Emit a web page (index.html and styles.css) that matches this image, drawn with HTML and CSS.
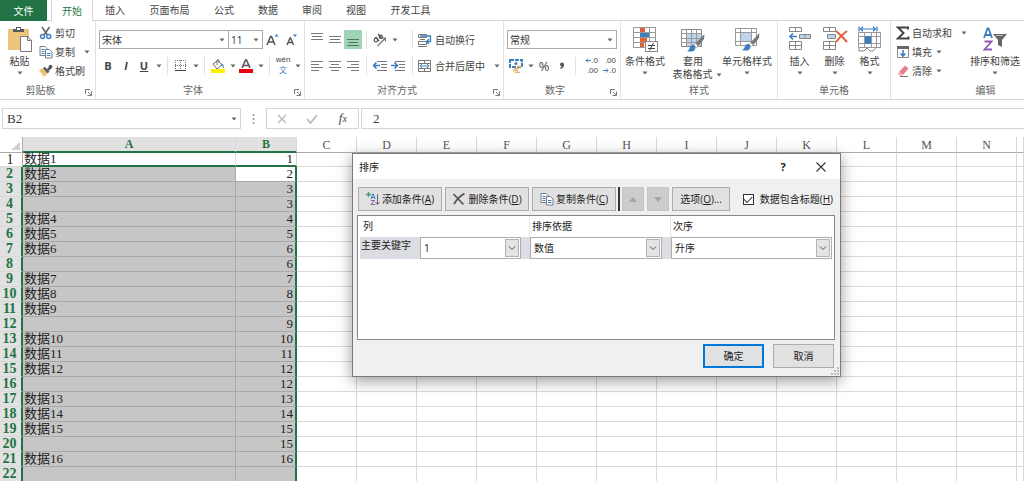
FILE: index.html
```html
<!DOCTYPE html>
<html lang="zh-CN">
<head>
<meta charset="utf-8">
<title>排序</title>
<link rel="stylesheet" href="styles.css">
</head>
<body>
<svg class="defs" aria-hidden="true">
  <symbol id="caret" viewBox="0 0 6 4"><path d="M0.5 0.5h5L3 3.5z" fill="#666"/></symbol>
  <symbol id="launch" viewBox="0 0 7 7"><path d="M.5 5V.5H5M3 3l3 3M6.5 2.5v4h-4" fill="none" stroke="#777"/></symbol>
  <symbol id="chev" viewBox="0 0 14 18"><rect x=".5" y=".5" width="13" height="17" fill="#e4e4e4" stroke="#b4b4b4"/><path d="M4 7.500l3 3 3-3" fill="none" stroke="#555"/></symbol>
  <symbol id="copy" viewBox="0 0 14 14"><path d="M1 1.5h5l2 2v7H1z" fill="#fff" stroke="#6f7f8f"/><path d="M2.500 4.500h3M2.500 6.500h3M2.500 8.500h3" stroke="#3f7fb5"/><path d="M6.500 4.500h4l2.500 2.500v6H6.500z" fill="#fff" stroke="#6f7f8f"/><path d="M8 8.500h3.500M8 10.500h3.500" stroke="#3f7fb5"/></symbol>
  <symbol id="brush" viewBox="0 0 18 18"><path d="M17.500 0L9 9l2.500 3L17 5z" fill="#777"/><path d="M8.500 9.500l2.500 2.500-1.500 1.500-2.700-2z" fill="#fff" stroke="#888" stroke-width=".6"/><path d="M0 17c3-1 2-4 4.500-5.500s5 1.500 3.500 4S3 18 0 17z" fill="#3c7fbf"/></symbol>
</svg>

<header>
  <nav class="tabs">
    <button class="tab file">文件</button>
    <button class="tab active">开始</button>
    <button class="tab w2">插入</button>
    <button class="tab w4">页面布局</button>
    <button class="tab w2">公式</button>
    <button class="tab w2">数据</button>
    <button class="tab w2">审阅</button>
    <button class="tab w2">视图</button>
    <button class="tab w4">开发工具</button>
  </nav>

  <div class="ribbon">
    <section class="group clipboard">
      <div class="body stacks">
        <button class="large">
          <svg width="26" height="26" viewBox="0 0 26 26"><rect x="1" y="3" width="21" height="21" fill="#ebc57c"/><path d="M6 6V3h3V1h5v2h3v3z" fill="#595959"/><rect x="10" y="2" width="3" height="2" fill="#fff"/><path d="M13.500 10.500h7l4 4v11h-11z" fill="#fff" stroke="#777"/><path d="M20.500 10.500v4h4" fill="none" stroke="#777"/></svg>
          <span>粘贴</span><svg class="caret"><use href="#caret"/></svg>
        </button>
        <div class="stack">
          <button class="small"><svg width="14" height="14" viewBox="0 0 14 14"><path d="M3 1l5.500 8M10.500 1L5 9" stroke="#666" stroke-width="1.600" fill="none"/><circle cx="3.500" cy="10.500" r="2" fill="none" stroke="#3c7fbf" stroke-width="1.400"/><circle cx="9.800" cy="10.500" r="2" fill="none" stroke="#3c7fbf" stroke-width="1.400"/></svg>剪切</button>
          <button class="small"><svg width="14" height="14"><use href="#copy"/></svg>复制<svg class="caret far"><use href="#caret"/></svg></button>
          <button class="small"><svg width="14" height="14" viewBox="0 0 14 14"><path d="M0 6l4-2 5 5-4 4z" fill="#ebc57c"/><path d="M5 3.500l4.500 5" stroke="#555" stroke-width="2.500"/><path d="M8 5l3.500-3.500 2 1.500L10 7z" fill="#555"/><circle cx="11.500" cy="2.500" r="1.800" fill="#555"/></svg>格式刷</button>
        </div>
      </div>
      <footer><span>剪贴板</span><button aria-label="剪贴板设置"><svg width="7" height="7"><use href="#launch"/></svg></button></footer>
    </section>

    <section class="group font">
      <div class="body rows">
        <div class="row">
          <span class="combo grow"><select aria-label="字体"><option>宋体</option></select><svg class="caret"><use href="#caret"/></svg></span>
          <span class="combo size"><select aria-label="字号"><option>11</option></select><svg class="caret"><use href="#caret"/></svg></span>
          <button class="tool wide" aria-label="增大字号"><svg width="14" height="14" viewBox="0 0 14 14"><path d="M1 12L4.500 3.500h1L9 12M2.500 9h5" fill="none" stroke="#555" stroke-width="1.500"/><path d="M8.500 3.500L10.500 1l2 2.500z" fill="#3c7fbf"/></svg></button>
          <button class="tool wide" aria-label="减小字号"><svg width="14" height="14" viewBox="0 0 14 14"><path d="M2 12l3-7h.6l3 7M3.200 9.500h4.400" fill="none" stroke="#555" stroke-width="1.400"/><path d="M8 1.500h4L10 4z" fill="#3c7fbf"/></svg></button>
        </div>
        <div class="row">
          <button class="tool letter"><b>B</b></button>
          <button class="tool letter"><b class="it">I</b></button>
          <button class="tool letter"><b><u>U</u></b></button>
          <svg class="caret"><use href="#caret"/></svg><i class="bar"></i>
          <button class="tool" aria-label="边框"><svg width="12" height="12" viewBox="0 0 12 12"><path d="M.5 0v11M5.500 0v11M10.500 0v11M0 .5h11M0 5.500h11" stroke="#777" stroke-dasharray="1 1"/><path d="M0 10.500h11" stroke="#444"/></svg></button>
          <svg class="caret"><use href="#caret"/></svg><i class="bar"></i>
          <button class="tool" aria-label="填充颜色"><svg width="14" height="14" viewBox="0 0 14 14"><path d="M2 5l5-3.500 4 4.500-5 4z" fill="#fff" stroke="#666"/><path d="M6 6V1.500Q6 .5 7 .5t1 1V4" fill="none" stroke="#777"/><path d="M10.500 4.500q3 .5 2 5-1.500-1-1-3z" fill="#3c7fbf"/><rect y="10" width="14" height="4" fill="#fff200"/></svg></button>
          <svg class="caret"><use href="#caret"/></svg>
          <button class="tool" aria-label="字体颜色"><svg width="14" height="14" viewBox="0 0 14 14"><path d="M3 9l3.500-8h1L11 9M4.200 6.500h5.600" fill="none" stroke="#555" stroke-width="1.600"/><rect y="10" width="14" height="4" fill="#e8000c"/></svg></button>
          <svg class="caret"><use href="#caret"/></svg><i class="bar"></i>
          <button class="tool phonetic"><span>wén</span><span class="blue">文</span></button>
          <svg class="caret"><use href="#caret"/></svg>
        </div>
      </div>
      <footer><span>字体</span><button aria-label="字体设置"><svg width="7" height="7"><use href="#launch"/></svg></button></footer>
    </section>

    <section class="group align">
      <div class="body rows">
        <div class="row">
          <button class="tool" aria-label="顶端对齐"><svg width="12" height="15" viewBox="0 0 12 15"><path d="M0 1.500h12M1 4.500h10M0 7.500h12" stroke="#777"/></svg></button>
          <button class="tool" aria-label="垂直居中"><svg width="12" height="15" viewBox="0 0 12 15"><path d="M0 4.500h12M1 7.500h10M0 10.500h12" stroke="#777"/></svg></button>
          <button class="tool on" aria-label="底端对齐"><svg width="12" height="15" viewBox="0 0 12 15"><path d="M0 7.500h12M1 10.500h10M0 13.500h12" stroke="#5b6e62"/></svg></button>
          <i class="bar"></i>
          <button class="tool" aria-label="方向"><svg width="14" height="14" viewBox="0 0 14 14"><path d="M4.500 13L12.500 5M12.500 8.500V5H9" fill="none" stroke="#777" stroke-width="1.200"/><circle cx="3" cy="7" r="1.800" fill="none" stroke="#555" stroke-width="1.200"/><path d="M2.500 4l3.500 4M5 1l4 4.500" stroke="#555" stroke-width="1.200"/><circle cx="7.800" cy="3.800" r="1.600" fill="none" stroke="#555" stroke-width="1.200"/></svg></button>
          <svg class="caret"><use href="#caret"/></svg>
          <button class="small"><svg width="14" height="14" viewBox="0 0 14 14"><path d="M.5 1.500h8v3h-8zM.5 8.500h8v3h-8z" fill="#fff" stroke="#777"/><path d="M2 3h10.500v5.500H9M11 6L8.500 8.500 11 11" fill="none" stroke="#3c7fbf" stroke-width="1.300"/><path d="M2 6.500h5M0 13.500h9" stroke="#777"/></svg>自动换行</button>
        </div>
        <div class="row">
          <button class="tool" aria-label="左对齐"><svg width="12" height="12" viewBox="0 0 12 12"><path d="M0 1.500h12M0 4.500h8M0 7.500h12M0 10.500h8" stroke="#777"/></svg></button>
          <button class="tool" aria-label="居中"><svg width="12" height="12" viewBox="0 0 12 12"><path d="M0 1.500h12M2 4.500h8M0 7.500h12M2 10.500h8" stroke="#777"/></svg></button>
          <button class="tool" aria-label="右对齐"><svg width="12" height="12" viewBox="0 0 12 12"><path d="M0 1.500h12M4 4.500h8M0 7.500h12M4 10.500h8" stroke="#777"/></svg></button>
          <i class="bar"></i>
          <button class="tool" aria-label="减少缩进"><svg width="14" height="12" viewBox="0 0 14 12"><path d="M4 1.500h10M8 4.500h6M8 7.500h6M4 10.500h10" stroke="#777"/><path d="M7 5.500H1M3.500 2.500l-3 3 3 3" fill="none" stroke="#3c7fbf" stroke-width="1.600"/></svg></button>
          <button class="tool" aria-label="增加缩进"><svg width="14" height="12" viewBox="0 0 14 12"><path d="M4 1.500h10M8 4.500h6M8 7.500h6M4 10.500h10" stroke="#777"/><path d="M0 5.500h6M3.500 2.500l3 3-3 3" fill="none" stroke="#3c7fbf" stroke-width="1.600"/></svg></button>
          <button class="small"><svg width="14" height="14" viewBox="0 0 14 14"><path d="M.5 1.500h12v11H.5zM.5 4.500h12M.5 9.500h12M6.500 1v3M6.500 10v3" fill="none" stroke="#777"/><path d="M2 7h9M4 5L2 7l2 2M9 5l2 2-2 2" fill="none" stroke="#3c7fbf"/></svg>合并后居中<svg class="caret far"><use href="#caret"/></svg></button>
        </div>
      </div>
      <footer><span>对齐方式</span><button aria-label="对齐设置"><svg width="7" height="7"><use href="#launch"/></svg></button></footer>
    </section>

    <section class="group number">
      <div class="body rows">
        <div class="row"><span class="combo grow"><select aria-label="数字格式"><option>常规</option></select><svg class="caret"><use href="#caret"/></svg></span></div>
        <div class="row">
          <button class="tool" aria-label="会计数字格式"><svg width="14" height="14" viewBox="0 0 14 14"><rect x="1" y="1" width="12" height="7" fill="#fff" stroke="#3c7fbf" stroke-width="2" stroke-dasharray="4 1"/><circle cx="7" cy="4.500" r="1.500" fill="#3c7fbf"/><path d="M5 9.500h5M4 11.500h5M6 13.500h5M8 7.500h5" stroke="#e8b365" stroke-width="1.400"/></svg></button>
          <svg class="caret"><use href="#caret"/></svg>
          <button class="tool percent">%</button>
          <button class="tool" aria-label="千位分隔"><svg width="6" height="8" viewBox="0 0 6 8"><circle cx="3" cy="2.500" r="2" fill="#555"/><path d="M5 2.500Q5 6 1.500 7l-.5-.8Q3 5 3 3z" fill="#555"/></svg></button>
          <i class="bar"></i>
          <button class="tool dec"><span><svg width="6" height="5" viewBox="0 0 6 5"><path d="M6 2.500H1M3 .5l-2 2 2 2" fill="none" stroke="#3c7fbf"/></svg>.0</span><span>.00</span></button>
          <button class="tool dec"><span>.00</span><span><svg width="6" height="5" viewBox="0 0 6 5"><path d="M0 2.500h5M3 .5l2 2-2 2" fill="none" stroke="#3c7fbf"/></svg>.0</span></button>
        </div>
      </div>
      <footer><span>数字</span><button aria-label="数字设置"><svg width="7" height="7"><use href="#launch"/></svg></button></footer>
    </section>

    <section class="group styles">
      <div class="body stacks">
        <button class="large">
          <svg width="26" height="26" viewBox="0 0 26 26"><path d="M1.500 1.500h22v20h-22zM1.500 6.500h22M1.500 11.500h22M1.500 16.500h22M8.500 1.500v20M17.500 1.500v20" fill="#fff" stroke="#999"/><path d="M8 2h5v4H8zM8 12h7v4H8zM8 17h4v4H8z" fill="#e0603a"/><path d="M8 7h9v4H8z" fill="#3c7fbf"/><rect x="13.500" y="15.500" width="12" height="10" fill="#fff" stroke="#888"/><path d="M16 19.500h7M16 22.500h7M21.500 17l-4 7.500" stroke="#444"/></svg>
          <span>条件格式</span><svg class="caret"><use href="#caret"/></svg>
        </button>
        <button class="large">
          <svg width="26" height="26" viewBox="0 0 26 26"><path d="M1.500 3.500h20v17h-20z" fill="#fff" stroke="#888"/><path d="M7 8h14v12H7z" fill="#bdd5ea"/><path d="M1.500 7.500h20M1.500 12.500h20M1.500 16.500h20M6.500 3.500v17M11.500 3.500v17M16.500 3.500v17" stroke="#999"/><use href="#brush" x="7" y="8" width="18" height="18"/></svg>
          <span>套用</span><span>表格格式<svg class="caret"><use href="#caret"/></svg></span>
        </button>
        <button class="large last">
          <svg width="26" height="26" viewBox="0 0 26 26"><path d="M1.500 2.500h21v17h-21zM1.500 6.500h21M1.500 15.500h21M6.500 2.500v17M17.500 2.500v17" fill="#fff" stroke="#999"/><path d="M7 7h10v8H7z" fill="#bdd5ea"/><use href="#brush" x="8" y="7" width="18" height="18"/></svg>
          <span>单元格样式</span><svg class="caret"><use href="#caret"/></svg>
        </button>
      </div>
      <footer><span>样式</span></footer>
    </section>

    <section class="group cells">
      <div class="body stacks">
        <button class="large">
          <svg width="24" height="26" viewBox="0 0 24 26"><path d="M1.500 1.500h12v4h-12zM7.500 1.500v4M1.500 15.500h12v8h-12zM1.500 19.500h12M7.500 15.500v8" fill="#fff" stroke="#888"/><path d="M11.500 8.500h11v4h-11z" fill="#bdd5ea" stroke="#888"/><path d="M17 8.500v4" stroke="#888"/><path d="M9 10.500H2M5 7.500l-3 3 3 3" fill="none" stroke="#3c7fbf" stroke-width="1.600"/></svg>
          <span>插入</span><svg class="caret"><use href="#caret"/></svg>
        </button>
        <button class="large">
          <svg width="26" height="26" viewBox="0 0 26 26"><path d="M1.500 1.500h12v4h-12zM7.500 1.500v4M1.500 15.500h12v8h-12zM1.500 19.500h12M7.500 15.500v8" fill="#fff" stroke="#888"/><path d="M5.500 8.500h8v4h-8z" fill="#bdd5ea" stroke="#888"/><path d="M14 5q5 4 11 11M25 5q-6 4-11 11" fill="none" stroke="#e0603a" stroke-width="2"/></svg>
          <span>删除</span><svg class="caret"><use href="#caret"/></svg>
        </button>
        <button class="large">
          <svg width="26" height="26" viewBox="0 0 26 26"><path d="M2 .5v5M20 .5v5M3 3h16M6 .8L3.500 3 6 5.200M16 .8L18.500 3 16 5.200" fill="none" stroke="#3c7fbf" stroke-width="1.200"/><path d="M1.500 6.500h22v15h-22zM1.500 10.500h22M1.500 17.500h22M7.500 6.500v15M14.500 6.500v15M19.500 6.500v15" fill="#fff" stroke="#999"/><path d="M8 10h6v8H8z" fill="#3c7fbf"/><path d="M2 22v3h5l3-3 3 3h3l3-3" fill="none" stroke="#888"/></svg>
          <span>格式</span><svg class="caret"><use href="#caret"/></svg>
        </button>
      </div>
      <footer><span>单元格</span></footer>
    </section>

    <section class="group edit">
      <div class="body stacks">
        <div class="stack">
          <button class="small"><svg width="14" height="14" viewBox="0 0 14 14"><path d="M12 3.500V1.500H2L7.500 7 2 12.500h10.500v-2" fill="none" stroke="#444" stroke-width="2"/></svg>自动求和<svg class="caret far"><use href="#caret"/></svg></button>
          <button class="small"><svg width="14" height="14" viewBox="0 0 14 14"><path d="M1.500 1.500h11v11h-11z" fill="#fff" stroke="#888"/><path d="M1 1h12v3H1z" fill="#666"/><path d="M7 5v6M4.500 8.500L7 11l2.500-2.500" fill="none" stroke="#3c7fbf" stroke-width="1.600"/></svg>填充<svg class="caret"><use href="#caret"/></svg></button>
          <button class="small"><svg width="14" height="14" viewBox="0 0 14 14"><path d="M3 8l6-6.500 3.500 3L7 11z" fill="#e8808f"/><path d="M3 8l4 3-2 1.500L1.500 10z" fill="#f2b5bd"/><path d="M4 12.500h8" stroke="#777"/></svg>清除<svg class="caret"><use href="#caret"/></svg></button>
        </div>
        <button class="large">
          <svg width="26" height="26" viewBox="0 0 26 26"><path d="M2 12L5.500 2.500h1L10 12M3.500 9h5" fill="none" stroke="#3c7fbf" stroke-width="1.800"/><path d="M2.500 15.500h7l-7 8h7.500" fill="none" stroke="#9159b5" stroke-width="1.800"/><path d="M11 8h14l-5 6v7l-4-2v-5z" fill="#666"/><path d="M14 9.500h7" stroke="#bbb"/></svg>
          <span>排序和筛选</span><svg class="caret"><use href="#caret"/></svg>
        </button>
      </div>
      <footer><span>编辑</span></footer>
    </section>
  </div>
</header>

<div class="formula">
  <span class="combo name"><input aria-label="名称框" value="B2"><svg class="caret"><use href="#caret"/></svg></span>
  <svg class="dots" width="3" height="12" viewBox="0 0 3 12"><path d="M1.500 1v11" stroke="#999" stroke-width="1.500" stroke-dasharray="2 2"/></svg>
  <div class="actions">
    <button aria-label="取消输入"><svg width="10" height="10" viewBox="0 0 10 10"><path d="M1 1l8 8M9 1L1 9" stroke="#bbb" stroke-width="1.500"/></svg></button>
    <button aria-label="输入"><svg width="12" height="10" viewBox="0 0 12 10"><path d="M1 5l3.500 4L11 1" fill="none" stroke="#bbb" stroke-width="1.800"/></svg></button>
    <button class="fx"><i>f<small>x</small></i></button>
  </div>
  <input class="value" aria-label="编辑栏" value="2">
</div>

<main>
  <table class="sheet">
    <colgroup><col class="num"><col class="a"><col class="b"><col span="12" class="c"><col></colgroup>
    <thead><tr id="letters"></tr></thead>
    <tbody id="rows"></tbody>
  </table>
</main>

<div class="dialog" role="dialog" aria-labelledby="title">
  <div class="title">
    <span id="title">排序</span>
    <button aria-label="帮助"><b>?</b></button>
    <button aria-label="关闭"><svg width="10" height="10" viewBox="0 0 10 10"><path d="M.5.5l9 9M9.500.5l-9 9" stroke="#333" stroke-width="1.100"/></svg></button>
  </div>
  <div class="commands">
    <button class="cmd"><svg width="14" height="14" viewBox="0 0 14 14"><path d="M0 2.500h5M2.500 0v5" stroke="#4a9a78" stroke-width="1.400"/><path d="M5 7l1.700-5h.6L9 7M5.500 5.500h3" fill="none" stroke="#3c7fbf"/><path d="M5 8.500h3.500L5 12.500h4" fill="none" stroke="#9159b5"/><path d="M11.500 2v10M9.500 10l2 2.500 2-2.500" fill="none" stroke="#666"/></svg><span>添加条件(<u>A</u>)</span></button>
    <button class="cmd"><svg width="14" height="14" viewBox="0 0 14 14"><path d="M1.500 2l10 10.500M12.500 1.500Q6 5 2 12" fill="none" stroke="#555" stroke-width="1.800"/></svg><span>删除条件(<u>D</u>)</span></button>
    <button class="cmd"><svg width="14" height="14"><use href="#copy"/></svg><span>复制条件(<u>C</u>)</span></button>
    <i class="split"></i>
    <button class="move" disabled aria-label="上移"><svg width="8" height="5" viewBox="0 0 8 5"><path d="M0 5l4-5 4 5z" fill="#a5a5a5"/></svg></button>
    <button class="move" disabled aria-label="下移"><svg width="8" height="5" viewBox="0 0 8 5"><path d="M0 0l4 5 4-5z" fill="#a5a5a5"/></svg></button>
    <button class="cmd opts"><span>选项(<u>O</u>)...</span></button>
    <label class="check"><input type="checkbox" checked><span>数据包含标题(<u>H</u>)</span></label>
  </div>
  <div class="list">
    <div class="line head"><span>列</span><span>排序依据</span><span>次序</span></div>
    <div class="line crit">
      <div class="key"><label for="key">主要关键字</label><span class="pick"><select id="key"><option>1</option></select><svg width="14" height="18"><use href="#chev"/></svg></span></div>
      <div><span class="pick"><select aria-label="排序依据"><option>数值</option></select><svg width="14" height="18"><use href="#chev"/></svg></span></div>
      <div><span class="pick"><select aria-label="次序"><option>升序</option></select><svg width="14" height="18"><use href="#chev"/></svg></span></div>
    </div>
  </div>
  <div class="ends"><button class="ok">确定</button><button>取消</button></div>
  <svg class="grip" width="8" height="8" viewBox="0 0 8 8"><path d="M6 0h2v2H6zM6 3h2v2H6zM3 3h2v2H3zM6 6h2v2H6zM3 6h2v2H3zM0 6h2v2H0z" fill="#bbb"/></svg>
</div>
<script src="sheet.js"></script>
</body>
</html>
```

FILE: styles.css
```css
* { box-sizing: border-box; }
body {
  margin: 0;
  height: 100vh;
  overflow: hidden;
  display: flex;
  flex-direction: column;
  background: #fff;
  color: #444;
  font: 10px/14px "Open Sans", "Noto Sans CJK SC", sans-serif;
}
button, input, select { font: inherit; color: inherit; margin: 0; padding: 0; border: 0; background: none; border-radius: 0; }
select { appearance: none; }
svg { flex: none; display: block; }
.defs { position: absolute; width: 0; height: 0; }
.caret { width: 6px; height: 4px; }

/* tabs */
.tabs { display: flex; height: 21px; border-bottom: 1px solid #d4d4d4; }
.tab { height: 20px; flex: none; }
.tab.file { width: 47px; height: 21px; background: #217346; color: #fff; }
.tab.active { width: 42px; height: 21px; margin-left: 4px; background: #fff; color: #217346; border: 1px solid #d4d4d4; border-width: 0 1px; }
.tab.w2 { width: 44px; }
.tab.w4 { width: 65px; }

/* ribbon */
.ribbon { display: flex; height: 79px; border-bottom: 1px solid #d4d4d4; overflow: hidden; }
.group { flex: none; display: flex; flex-direction: column; padding-bottom: 2px; }
.group + .group { border-left: 1px solid #e1e1e1; }
.body { flex: 1; }
.group footer { display: flex; height: 14px; line-height: 14px; color: #666; }
.group footer span { flex: 1; text-align: center; }
.group footer button { width: 14px; display: grid; place-items: center; padding-top: 4px; }
.clipboard { width: 95px; }
.font { width: 209px; }
.align { width: 199px; }
.number { width: 117px; }
.styles { width: 157px; }
.cells { width: 113px; }
.edit { width: 190px; }

.stacks { display: flex; padding-top: 5px; }
.stack { display: flex; flex-direction: column; gap: 5px; }
.small { display: flex; align-items: center; gap: 2px; height: 14px; white-space: nowrap; }
.small .caret { margin-left: 2px; }
.small .caret.far { margin-left: 7px; }
.large { display: flex; flex-direction: column; align-items: center; justify-content: flex-start; line-height: 13px; white-space: nowrap; }
.large > svg:first-child { margin-bottom: 3px; }
.large > .caret { margin-top: 3px; }
.large span { display: flex; align-items: center; gap: 3px; }
.clipboard .large { width: 39px; }
.styles .large { width: 48px; }
.styles .large.last { width: 60px; }
.styles .large + .large span + span { padding-left: 8px; }
.cells .stacks { padding-left: 4px; }
.cells .large { width: 35px; }
.edit .stack { width: 76px; padding-left: 5px; }
.edit .large { width: 56px; }

.rows { display: flex; flex-direction: column; gap: 7px; padding: 9px 3px 0; }
.row { display: flex; align-items: center; height: 19px; }
.row > .caret { margin: 0 1px 0 3px; }
.combo { display: grid; grid-template: 100% / 1fr; align-items: center; border: 1px solid #ababab; height: 19px; color: #333; }
.combo > * { grid-area: 1 / 1; min-width: 0; }
.combo select, .combo input { width: 100%; height: 17px; padding-left: 2px; outline: 0; }
.combo .caret { justify-self: end; margin-right: 3px; pointer-events: none; }
.grow { flex: 1; }
.size { width: 34px; border-left: 0; }
.tool { height: 19px; width: 18px; flex: none; display: grid; place-items: center; }
.wide { width: 19px; }
.letter { font-size: 11px; }
.it { font-style: italic; }
.bar { width: 1px; height: 18px; margin: 0 4px; background: #e1e1e1; flex: none; }
.phonetic, .dec { font-family: "Liberation Sans", "Noto Sans CJK SC", sans-serif; font-size: 8px; line-height: 10px; align-content: center; }
.phonetic .blue { color: #3c7fbf; line-height: 12px; }
.on { background: #9fd5b7; }
.align .small { width: 88px; height: 19px; margin-left: auto; padding-left: 5px; border-left: 1px solid #e1e1e1; gap: 3px; }
.align .small .far { margin-left: auto; }
.percent { font-size: 13px; }
.dec { justify-items: end; }
.dec span { display: flex; align-items: center; }

/* formula bar */
.formula { display: flex; align-items: center; height: 21px; margin: 8px 0; padding-left: 2px; font-family: "Liberation Serif", serif; font-size: 13px; }
.name { width: 239px; height: 21px; border-color: #d4d4d4; }
.name.combo input { padding-left: 4px; }
.dots { margin: 0 11px; }
.actions { display: flex; width: 93px; height: 21px; border: 1px solid #d4d4d4; }
.actions button { flex: 1; display: grid; place-items: center; }
.fx { font-size: 13px; }
.fx small { font-size: 10px; }
.value { flex: 1; height: 21px; margin-left: 2px; padding-left: 11px; border: 1px solid #d4d4d4; border-right: 0; }

/* sheet */
main { flex: 1; overflow: hidden; }
.sheet { width: 100%; table-layout: fixed; border-collapse: separate; border-spacing: 0; font: 13px/14px "Liberation Serif", "Noto Sans CJK SC", serif; color: #222; }
.sheet .num { width: 23px; }
.sheet .a { width: 213px; }
.sheet .b { width: 61px; }
.sheet .c { width: 60px; }
.sheet th, .sheet td { height: 15px; padding: 0 1px; border: 0 solid #d9d9d9; border-width: 0 1px 1px 0; white-space: nowrap; }
.sheet thead th { border-bottom-color: #ababab; font-size: 12px; font-weight: 400; color: #555; }
.sheet thead th.sel { background: #e1e1e1; color: #217346; font-weight: 700; border-bottom: 2px solid #217346; }
.sheet thead th:first-child { padding: 0 2px; border-right-color: #ababab; }
.sheet thead svg { margin: 3px 0 0 auto; }
.sheet tbody th { padding: 0 2px 0 0; font-size: 14px; font-weight: 400; border-right-color: #ababab; }
.sheet tbody th.sel { background: #e1e1e1; color: #217346; font-weight: 700; border-right: 2px solid #217346; }
.sheet .first > * { height: 14px; line-height: 12px; }
.sheet .first .data { border-bottom: 2px solid #217346; }
.sheet td.pickd { background: #c6c6c6; border-color: #a9a9a9; }
.sheet td.cur { background: #fff; }
.sheet td.right { text-align: right; padding-right: 3px; }
.sheet td.pickd.right { border-right: 2px solid #217346; padding-right: 2px; }

/* dialog */
.dialog {
  position: absolute; left: 352px; top: 153px; width: 489px;
  padding-bottom: 8px;
  border: 1px solid #7a7a7a; background: #f0f0f0; color: #222;
  box-shadow: 0 4px 14px rgba(0, 0, 0, .4);
}
.title { display: flex; align-items: center; height: 25px; padding: 0 0 0 6px; background: #fff; }
.title span { flex: 1; }
.title button { width: 38px; height: 25px; display: grid; place-items: center; font-size: 11px; }
.commands { display: flex; align-items: center; gap: 3px; padding: 8px 7px 4px 5px; }
.cmd, .move { height: 24px; border: 1px solid #adadad; background: #e1e1e1; }
.cmd { width: 84px; display: flex; align-items: center; justify-content: center; gap: 2px; white-space: nowrap; }
.split { width: 2px; height: 24px; margin: 0 -1px; background: #333; }
.move { width: 22px; display: grid; place-items: center; background: #ccc; border-color: #c4c4c4; }
.opts { width: 58px; }
.check { display: flex; align-items: center; gap: 6px; margin-left: auto; white-space: nowrap; }
.check input { appearance: none; width: 11px; height: 11px; border: 1px solid #333; background: #fff; display: grid; place-items: center; }
.check input:checked::before { content: ""; width: 7px; height: 4px; margin-bottom: 2px; border: solid #333; border-width: 0 0 1px 1px; transform: rotate(-45deg); }
.list { min-height: 125px; margin: 0 5px 4px 4px; padding: 0 2px; border: 1px solid #828790; background: #fff; }
.line { display: grid; grid-template-columns: 169px 141px 1fr; }
.head { height: 21px; line-height: 20px; }
.head span { padding-left: 3px; }
.head span + span { border-left: 1px solid #e5e5e5; padding-left: 2px; }
.crit { background: #dcdde2; }
.crit > div { padding: 0 8px 0 1px; }
.crit > div:last-child { padding-right: 0; }
.key { display: flex; }
.key label { width: 59px; line-height: 16px; }
.pick { flex: 1; display: grid; align-items: center; height: 22px; border: 1px solid #adadad; background: #fff; }
.pick > * { grid-area: 1 / 1; }
.pick select { width: 100%; height: 20px; padding-left: 3px; }
.pick svg { justify-self: end; margin-right: 1px; pointer-events: none; }
.ends { display: flex; justify-content: flex-end; gap: 9px; padding-right: 6px; }
.ends button { width: 61px; height: 24px; border: 1px solid #adadad; background: #e1e1e1; }
.ends .ok { border: 2px solid #0078d7; }
.grip { position: absolute; right: 1px; bottom: 1px; }
```

FILE: sheet.js
```js
const columns = ["A", "B", "C", "D", "E", "F", "G", "H", "I", "J", "K", "L", "M", "N", ""];
const data = [
  ["数据1", 1], ["数据2", 2], ["数据3", 3], ["", 3], ["数据4", 4], ["数据5", 5],
  ["数据6", 6], ["", 6], ["数据7", 7], ["数据8", 8], ["数据9", 9], ["", 9],
  ["数据10", 10], ["数据11", 11], ["数据12", 12], ["", 12], ["数据13", 13],
  ["数据14", 14], ["数据15", 15], ["", 15], ["数据16", 16], ["", ""]
];

document.getElementById("letters").innerHTML =
  '<th><svg width="9" height="8" viewBox="0 0 9 8"><path d="M9 0v8H0z" fill="#d0d0d0"/></svg></th>' +
  columns.map((c, i) => `<th class="${i < 2 ? "sel" : ""}">${c}</th>`).join("");

document.getElementById("rows").innerHTML = data.map(([a, b], r) => {
  const picked = r > 0 ? "pickd" : "data";
  return `<tr class="${r ? "" : "first"}"><th class="${r ? "sel" : ""}">${r + 1}</th>` +
    `<td class="${picked}">${a}</td>` +
    `<td class="${picked} right ${r === 1 ? "cur" : ""}">${b}</td>` +
    "<td></td>".repeat(columns.length - 2) + "</tr>";
}).join("");
```
